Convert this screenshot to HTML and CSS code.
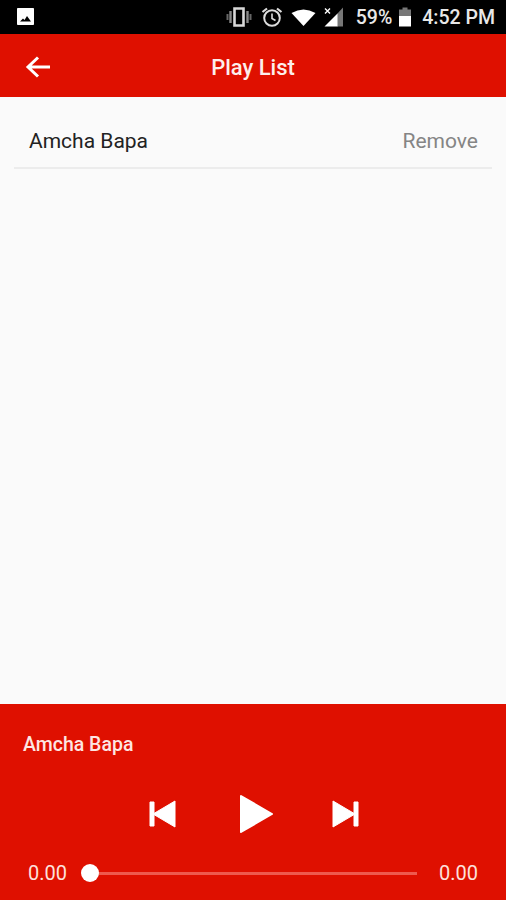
FILE: index.html
```html
<!DOCTYPE html>
<html>
<head>
  <link rel="stylesheet" href="styles.css">
</head>
<body>
<div class="phone">
  <div class="statusbar">
    <svg class="ic-photo" width="20" height="20" viewBox="0 0 20 20">
      <path fill="#fff" stroke="#fff" stroke-linejoin="round" d="M1.500 1.500h16v16h-16z"/>
      <path fill="#000" d="M4 14.500l3-3 1.500 1.500 2.500-4 4 5.500z"/>
    </svg>
    <div class="status-right">
      <svg class="ic-vib" width="26" height="20" viewBox="0 0 26 20">
        <path fill="none" stroke="#d8d8d8" stroke-width="2.600" d="M8.500 1.500h9v17h-9z"/>
        <path fill="none" stroke="#888" stroke-width="2.400" d="M4.500 4v12M21.500 4v12"/>
        <path fill="none" stroke="#666" stroke-width="2" d="M1.500 7v6M24.500 7v6"/>
      </svg>
      <svg class="ic-alarm" width="22" height="20" viewBox="0 0 22 20">
        <circle cx="11" cy="11" r="7.800" fill="none" stroke="#ddd" stroke-width="2"/>
        <path fill="none" stroke="#ddd" stroke-width="1.600" d="M11 6.500V11.500l3.500 2"/>
        <path fill="none" stroke="#ddd" stroke-width="2.200" d="M1.500 5l4.500-3.500M20.500 5L16 1.500"/>
      </svg>
      <svg class="ic-wifi" width="25" height="17" viewBox="0 0 25 17">
        <path fill="#fff" d="M0.500 4Q12.500-3 24.500 4L12.500 17z"/>
      </svg>
      <svg class="ic-signal" width="20" height="20" viewBox="0 0 20 20">
        <path fill="#777" d="M19 0.500V19.500h-6V7z"/>
        <path fill="#fff" d="M13.500 6.500V19.500H0.500z"/>
        <path fill="none" stroke="#fff" stroke-width="1.400" d="M1 1.500l5 5M6 1.500l-5 5"/>
      </svg>
      <span class="pct">59%</span>
      <svg class="ic-batt" width="14" height="20" viewBox="0 0 14 20">
        <path fill="#777" d="M4.500 0.500h5v2h3.500v7H1v-7h3.500z"/>
        <path fill="#fff" d="M1 9h12v10.500H1z"/>
      </svg>
      <span class="clock">4:52 PM</span>
    </div>
  </div>

  <div class="toolbar">
    <svg class="back" width="26" height="24" viewBox="0 0 26 24">
      <path fill="none" stroke="#fff" stroke-width="3" d="M25 12H4M13 2.500L3 12l10 9.500"/>
    </svg>
    <span class="title">Play List</span>
  </div>

  <div class="list">
    <div class="row">
      <span class="name">Amcha Bapa</span>
      <span class="remove">Remove</span>
    </div>
  </div>

  <div class="player">
    <div class="now">Amcha Bapa</div>
    <div class="controls">
      <svg width="27" height="30" viewBox="0 0 27 30">
        <path fill="#fff" stroke="#fff" stroke-linejoin="round" d="M1 3h4v24H1zM26 2v26L4 15z"/>
      </svg>
      <svg class="play" width="35" height="40" viewBox="0 0 35 40">
        <path fill="#fff" stroke="#fff" stroke-width="2" stroke-linejoin="round" d="M2 2l31 18L2 38z"/>
      </svg>
      <svg width="27" height="30" viewBox="0 0 27 30">
        <path fill="#fff" stroke="#fff" stroke-linejoin="round" d="M26 3h-4v24h4zM1 2v26l22-13z"/>
      </svg>
    </div>
    <div class="seek">
      <span class="time">0.00</span>
      <div class="track"><div class="thumb"></div></div>
      <span class="time">0.00</span>
    </div>
  </div>
</div>
</body>
</html>
```

FILE: styles.css
```css
* {
  margin: 0;
  padding: 0;
  box-sizing: border-box;
}
body {
  font-family: Roboto, sans-serif;
  background: #fafafa;
}
svg {
  display: block;
  flex: none;
}
.phone {
  height: 900px;
  display: flex;
  flex-direction: column;
}
.statusbar {
  height: 34px;
  background: #000;
  color: #e8e8e8;
  display: flex;
  align-items: center;
  justify-content: space-between;
  padding: 0 11px 0 16px;
}
.status-right {
  display: flex;
  align-items: center;
}
.ic-vib {
  margin-right: 9px;
}
.ic-alarm {
  margin-right: 8px;
}
.ic-wifi {
  margin-right: 8px;
}
.ic-signal {
  margin-right: 12px;
}
.pct {
  font-size: 19.500px;
  font-weight: 500;
  margin-right: 6px;
}
.ic-batt {
  margin-right: 10px;
}
.clock {
  font-size: 19.500px;
  font-weight: 500;
}
.toolbar {
  height: 63px;
  background: #df1000;
  color: #fff;
  display: flex;
  align-items: center;
  justify-content: center;
  padding-top: 3px;
  position: relative;
}
.back {
  position: absolute;
  left: 25px;
  top: 21px;
}
.title {
  font-size: 22px;
  font-weight: 500;
  color: #fdeeec;
}
.list {
  flex: 1;
  padding: 0 14px;
}
.row {
  height: 72px;
  border-bottom: 2px solid #ececec;
  display: flex;
  align-items: center;
  justify-content: space-between;
  padding: 18px 14px 0 15px;
  font-size: 21px;
}
.name {
  color: #222;
}
.remove {
  color: #858585;
}
.player {
  height: 196px;
  background: #df1000;
  color: #fff;
  padding: 0 28px 0 23px;
}
.now {
  font-size: 19.500px;
  font-weight: 500;
  color: #fde6e3;
  padding-top: 30px;
  line-height: 22px;
}
.controls {
  display: flex;
  align-items: center;
  justify-content: center;
  margin: 38px 0 0 7px;
  height: 40px;
}
.play {
  margin: 0 58px 0 63px;
}
.seek {
  display: flex;
  align-items: center;
  margin: 27px 0 0 5px;
  height: 24px;
}
.time {
  font-size: 20px;
  color: #fde0dc;
}
.track {
  flex: 1;
  height: 3px;
  background: #ee5a4e;
  margin: 0 22px 0 23px;
  position: relative;
}
.thumb {
  position: absolute;
  left: -9px;
  top: -7.500px;
  width: 18px;
  height: 18px;
  border-radius: 50%;
  background: #fff;
}
```
